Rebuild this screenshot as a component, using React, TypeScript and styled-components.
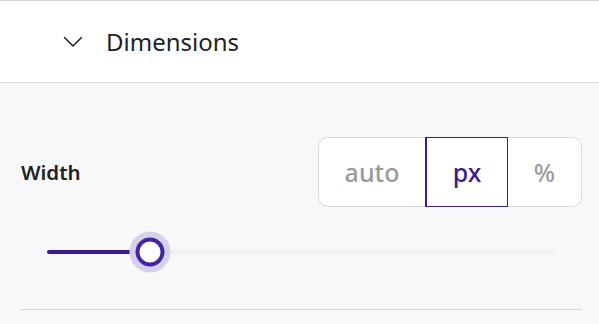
import styled, { createGlobalStyle } from 'styled-components';

const GlobalStyle = createGlobalStyle`
  html, body {
    margin: 0;
    padding: 0;
    background-color: #f7f8fa;
    font-family: "Noto Sans", "Open Sans", sans-serif;
  }
`;

type Unit = 'auto' | 'px' | '%';

const units: Unit[] = ['auto', 'px', '%'];

const Chevron = () => (
  <svg width="20" height="12" viewBox="0 0 20 12" fill="none">
    <path d="M1.5 1.5L10 10L18.5 1.5" stroke="#222" strokeWidth="1.5" strokeLinecap="round" strokeLinejoin="round" />
  </svg>
);

const UnitToggle = ({ active }: { active: Unit }) => {
  return (
    <Segmented>
      {units.map((u) => (
        <Segment key={u} active={u === active} unit={u}>
          {u}
        </Segment>
      ))}
    </Segmented>
  );
};

const Slider = ({ value }: { value: number }) => {
  return (
    <SliderWrap>
      <Track>
        <Fill style={{ width: `${value}%` }} />
        <Thumb style={{ left: `${value}%` }} />
      </Track>
    </SliderWrap>
  );
};

const App = () => {
  return (
    <>
      <GlobalStyle />
      <Panel>
        <Header>
          <Chevron />
          <HeaderTitle>Dimensions</HeaderTitle>
        </Header>
        <Body>
          <Row>
            <Label>Width</Label>
            <UnitToggle active="px" />
          </Row>
          <Slider value={20} />
          <Divider />
        </Body>
      </Panel>
    </>
  );
};

const Panel = styled.div`
  width: 599px;
  min-height: 324px;
  background-color: #f7f8fa;
  border-top: 1px solid #d3d6da;
`;

const Header = styled.div`
  height: 82px;
  display: flex;
  align-items: center;
  gap: 23px;
  padding-left: 63px;
  background-color: #fff;
  border-bottom: 1px solid #d9dadd;
  box-sizing: border-box;
`;

const HeaderTitle = styled.span`
  font-size: 24px;
  color: #222;
  line-height: 1;
`;

const Body = styled.div`
  padding: 54px 17px 0 21px;
`;

const Row = styled.div`
  display: flex;
  align-items: center;
  justify-content: space-between;
`;

const Label = styled.span`
  font-size: 20.5px;
  font-weight: 600;
  color: #222;
`;

const Segmented = styled.div`
  display: flex;
  height: 70px;
  background-color: #fff;
  border: 1px solid #d4d7dc;
  border-radius: 10px;
  box-sizing: border-box;
`;

const Segment = styled.div<{ active: boolean; unit: Unit }>`
  display: flex;
  align-items: center;
  justify-content: center;
  width: ${(p) => (p.unit === 'auto' ? 106 : p.unit === 'px' ? 83 : 73)}px;
  margin: ${(p) => (p.active ? '-1px 0' : '0')};
  box-sizing: border-box;
  font-size: 25px;
  font-weight: 500;
  color: ${(p) => (p.active ? '#3b1e8e' : '#9b9b9b')};
  border: ${(p) => (p.active ? '1px solid #3b1e8e' : 'none')};
  border-left-width: ${(p) => (p.active ? '2px' : '0')};
`;

const SliderWrap = styled.div`
  height: 40px;
  margin-top: 25px;
  padding: 0 26px;
  display: flex;
  align-items: center;
`;

const Track = styled.div`
  position: relative;
  flex: 1;
  height: 6px;
  border-radius: 3px;
  background-color: #f2f2f3;
`;

const Fill = styled.div`
  position: absolute;
  left: 0;
  top: 1px;
  height: 4px;
  border-radius: 2px;
  background-color: #3a1c8c;
`;

const Thumb = styled.div`
  position: absolute;
  top: 50%;
  margin-left: 1px;
  width: 21px;
  height: 21px;
  border-radius: 50%;
  background-color: #fff;
  border: 4px solid #4325a0;
  box-shadow: 0 0 0 6px #d7d0ea;
  transform: translate(-50%, -50%);
`;

const Divider = styled.div`
  margin-top: 37px;
  height: 1px;
  background-color: #d5d6d9;
`;

export default App;
